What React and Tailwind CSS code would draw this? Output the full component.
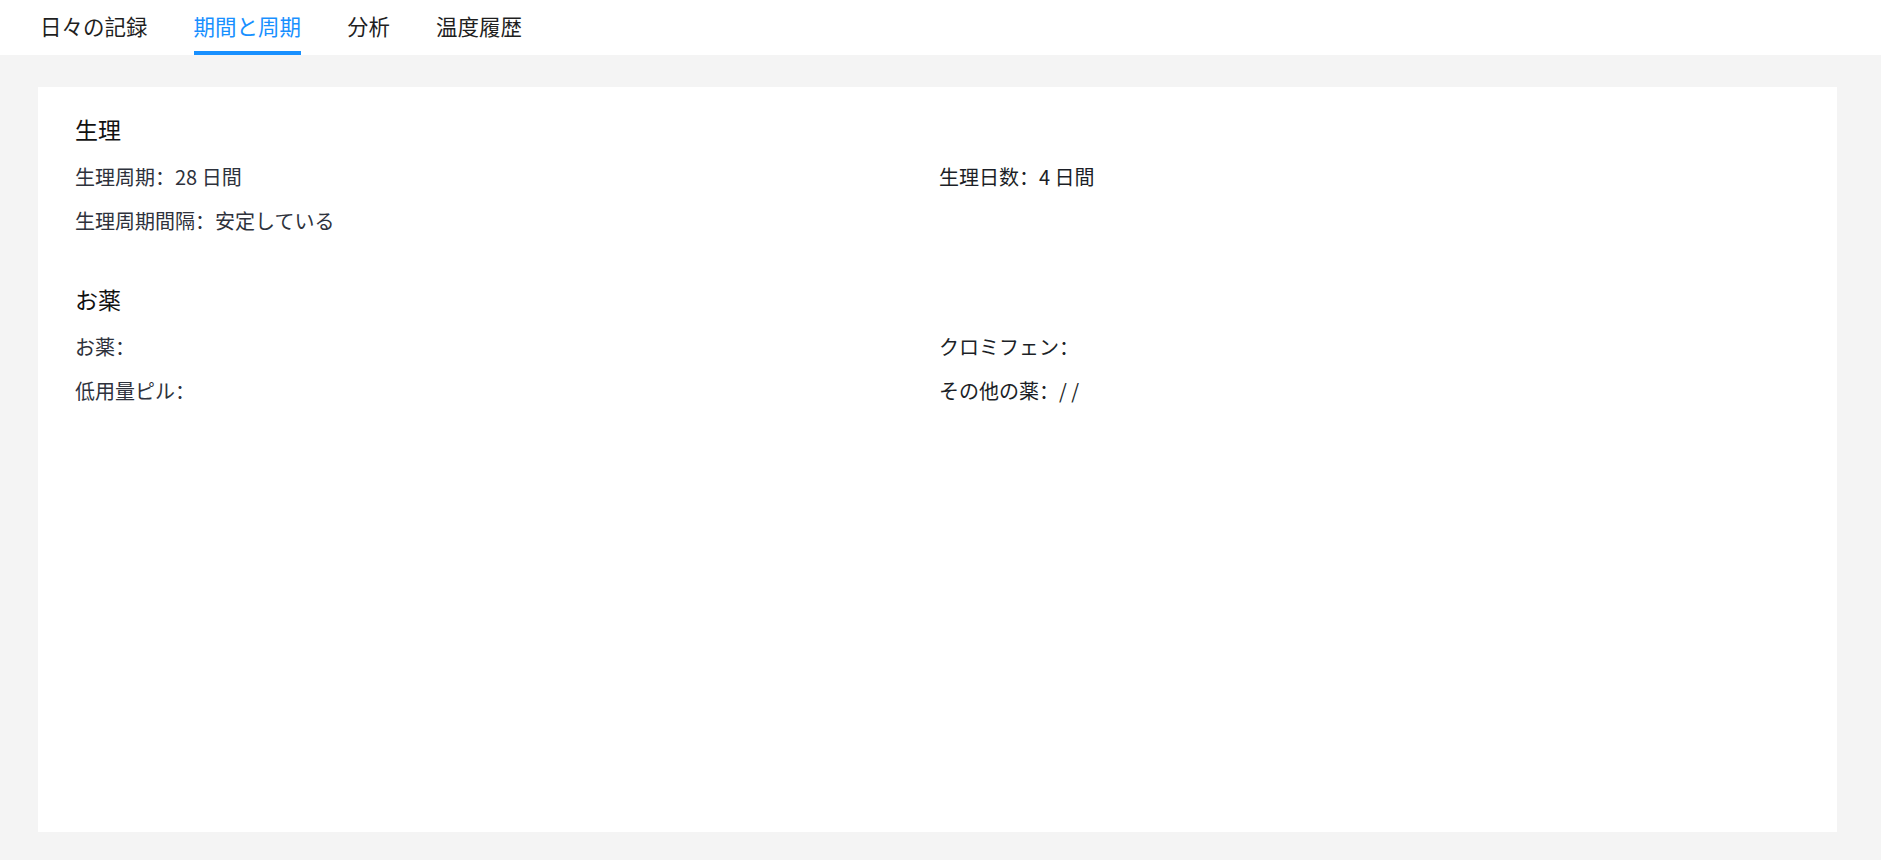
import React from "react";

const tabs = ["日々の記録", "期間と周期", "分析", "温度履歴"];

const sections = [
  {
    title: "生理",
    rows: [
      ["生理周期：28 日間", "生理日数：4 日間"],
      ["生理周期間隔：安定している", ""],
    ],
  },
  {
    title: "お薬",
    rows: [
      ["お薬：", "クロミフェン："],
      ["低用量ピル：", "その他の薬：/ /"],
    ],
  },
];

const font = { fontFamily: '"Noto Sans CJK SC", "Noto Sans CJK JP", "Noto Sans", sans-serif' };

const App = () => {
  const active = 1;

  return (
    <div className="w-[1881px] h-[860px] flex flex-col bg-[#f4f4f4]" style={font}>
      {/* Tabs */}
      <div className="h-[55px] shrink-0 bg-white flex pl-[40px] gap-[46px]">
        {tabs.map((t, i) => (
          <div
            key={t}
            className={
              i === active
                ? "relative h-full flex items-center text-[21.5px] text-[#1890ff] pb-[3px]"
                : "relative h-full flex items-center text-[21.5px] text-[#1f1f1f] pb-[3px]"
            }
          >
            {t}
            {i === active && (
              <span className="absolute left-0 right-0 bottom-0 h-[4px] bg-[#1890ff]" />
            )}
          </div>
        ))}
      </div>

      {/* Content */}
      <div className="flex-1 pt-[32px] pl-[38px] pr-[44px] pb-[28px]">
        <div className="h-full bg-white pl-[37px] pt-[26px]">
          {sections.map((s, si) => (
            <div key={s.title} className={si > 0 ? "mt-[40px]" : ""}>
              <h2 className="text-[23px] leading-[32px] text-[#111] mb-[10px]">
                {s.title}
              </h2>
              {s.rows.map((r, ri) => (
                <div key={ri} className="grid grid-cols-[864px_1fr] h-[44px]">
                  <div className="text-[20px] leading-[44px] text-[#2e323c]">
                    {r[0]}
                  </div>
                  <div className="text-[20px] leading-[44px] text-[#1c1f27]">
                    {r[1]}
                  </div>
                </div>
              ))}
            </div>
          ))}
        </div>
      </div>
    </div>
  );
};

export default App;
